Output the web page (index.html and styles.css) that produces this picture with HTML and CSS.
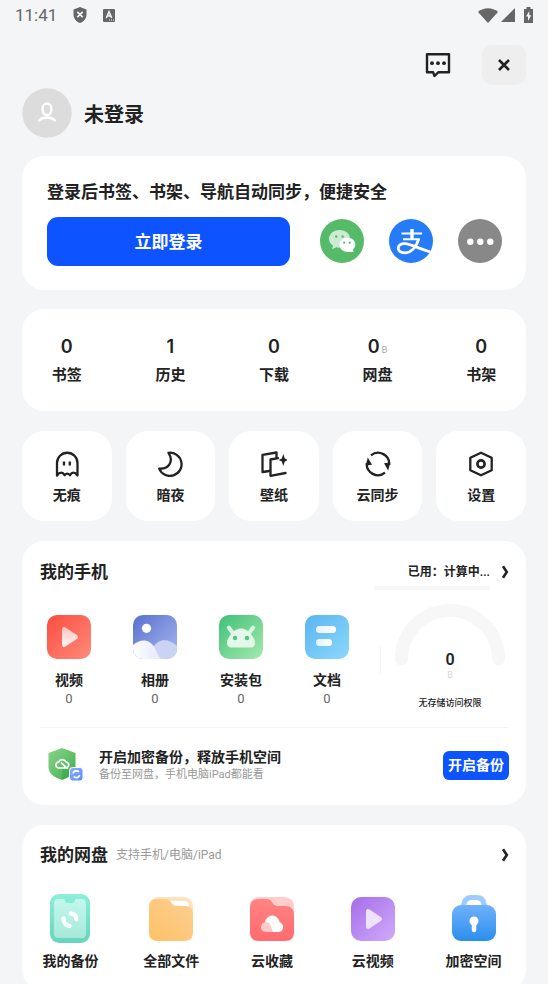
FILE: index.html
```html
<!DOCTYPE html>
<html lang="zh-CN">
<head>
<meta charset="utf-8">
<meta name="viewport" content="width=device-width, initial-scale=1">
<title>我的</title>
<link rel="stylesheet" href="styles.css">
</head>
<body>
<header class="status-bar">
  <time class="clock">11:41</time>
  <svg class="status-icon" width="14" height="16" viewBox="0 0 14 16"><path fill="#666" d="M7 0 13.5 2.5V7.500C13.500 11.500 10.800 14.600 7 16 3.200 14.600.5 11.500.5 7.500V2.500z"/><path d="m4.300 4.800 5.400 5.400m0-5.400-5.400 5.400" stroke="#f4f5f7" stroke-width="1.700"/></svg>
  <svg class="status-icon" width="12" height="13" viewBox="0 0 12 13"><rect width="12" height="13" rx="1" fill="#666"/><path d="M3.300 9 6 2.800 8.700 9M4.200 7h3.600" fill="none" stroke="#f4f5f7" stroke-width="1.600"/><path d="M6 11h5" stroke="#f4f5f7" stroke-dasharray="1 1"/></svg>
  <div class="signals">
    <svg width="20" height="15" viewBox="0 0 20 15"><path fill="#666" d="M0 4C5.500-1 14.500-1 20 4L10 15z"/></svg>
    <svg width="14" height="14" viewBox="0 0 14 14"><path fill="#666" d="M14 0v14H0z"/></svg>
    <svg class="battery" width="9" height="16" viewBox="0 0 9 16"><path fill="#666" d="M2.500 0h4v2H9v14H0V2h2.500z"/><path fill="#f4f5f7" d="M5.300 4 2 9.500h2V14l3.300-5.800H5.300z"/></svg>
  </div>
</header>

<main class="page">
  <div class="actions">
    <button class="icon-button" aria-label="消息"><svg width="26" height="26" viewBox="0 0 26 26"><path d="M2 2.200h22v18H13.500L9.500 24l-1.400-3.800H2z" fill="none" stroke="#222" stroke-width="2.400" stroke-linejoin="round"/><g fill="#222"><circle cx="7" cy="11.200" r="1.900"/><circle cx="13" cy="11.200" r="1.900"/><circle cx="19" cy="11.200" r="1.900"/></g></svg></button>
    <button class="close" aria-label="关闭"><svg width="12" height="12" viewBox="0 0 12 12"><path d="m1 1 10 10m0-10-10 10" stroke="#222" stroke-width="2.600"/></svg></button>
  </div>

  <div class="profile">
    <svg class="avatar" width="50" height="50" viewBox="0 0 50 50"><circle cx="25" cy="25" r="24.700" fill="#dcdcdc"/><g fill="none" stroke="#fff" stroke-width="2.400" stroke-linecap="round"><rect x="20.700" y="15.500" width="8.600" height="11.500" rx="4.300"/><path d="M17 32.500c4-4 12-4 16 0"/></g></svg>
    <h1 class="name">未登录</h1>
  </div>

  <section class="card login">
    <h2 class="login-title">登录后书签、书架、导航自动同步，便捷安全</h2>
    <div class="login-row">
      <button class="login-button">立即登录</button>
      <div class="providers">
        <button class="icon-button" aria-label="微信"><svg width="44" height="44" viewBox="0 0 44 44"><circle cx="22" cy="22" r="22" fill="#56bb68"/><path fill="#cdebd2" d="M19.500 11C13.500 11 9 15 9 19.800c0 2.900 1.500 5.200 4 6.800l-.8 3.700 4-2c1 .3 2.200.4 3.300.4 6 0 10.500-4 10.500-8.900S25.500 11 19.500 11"/><g fill="#56bb68"><circle cx="16.200" cy="17.500" r="1.200"/><circle cx="22.700" cy="17.500" r="1.200"/></g><path fill="#fff" d="M27.500 18.800c-4.500 0-8 3.100-8 7s3.500 7.100 8 7.100h5.900l-.3-2.600c1.300-1.200 2.200-2.700 2.200-4.500 0-3.900-3-7-7.800-7"/><g fill="#56bb68"><circle cx="24.200" cy="23.700" r="1.100"/><circle cx="29.700" cy="23.700" r="1.100"/></g></svg></button>
        <button class="icon-button" aria-label="支付宝"><svg width="44" height="44" viewBox="0 0 44 44"><circle cx="22" cy="22" r="22" fill="#267bf8"/><g fill="none" stroke="#fff"><path d="M12.500 14.600H33M14 20.300h17" stroke-width="2"/><path d="M23 10v10" stroke-width="3.400"/><path d="M29.500 20.300C27 29 21.500 33.800 15.500 33.800c-4 0-6.500-2-6.300-5 .2-3 3.300-4.700 7.500-4.100C23 25.600 30 29.600 41.500 33" stroke-width="2.800"/></g></svg></button>
        <button class="icon-button" aria-label="更多登录方式"><svg width="44" height="44" viewBox="0 0 44 44"><circle cx="22" cy="22" r="22" fill="#888"/><g fill="#fff"><circle cx="12.300" cy="22.800" r="3.200"/><circle cx="22.300" cy="22.800" r="3.200"/><circle cx="32.300" cy="22.800" r="3.200"/></g></svg></button>
      </div>
    </div>
  </section>

  <nav class="card five stats">
    <a href="#" class="stat"><span class="number">0</span>书签</a>
    <a href="#" class="stat"><span class="number">1</span>历史</a>
    <a href="#" class="stat"><span class="number">0</span>下载</a>
    <a href="#" class="stat"><span class="number has-unit">0<small class="unit">B</small></span>网盘</a>
    <a href="#" class="stat"><span class="number">0</span>书架</a>
  </nav>

  <div class="five">
    <button class="tool"><svg width="26" height="26" viewBox="0 0 26 26" fill="none" stroke="#222" stroke-width="2.300" stroke-linejoin="round"><path d="M3 24.500V12a10 10 0 0 1 20.500 0v12.500q-2-2.800-4.200-2.800-1.800 0-3.300 2.500-2.700-3-5.400 0-1.500-2.500-3.300-2.500-2.300 0-4.300 2.800z"/><path d="M10 10.500v4m5.800-4v4"/></svg>无痕</button>
    <button class="tool"><svg width="26" height="26" viewBox="0 0 26 26" fill="none" stroke="#222" stroke-width="2.300" stroke-linejoin="round"><path d="M11.500 1.800A11.600 11.600 0 1 1 2.200 17.600C12 18.500 17 10 11.500 1.800z"/></svg>暗夜</button>
    <button class="tool"><svg width="26" height="26" viewBox="0 0 26 26" fill="none" stroke="#222" stroke-width="2.300" stroke-linejoin="round" stroke-linecap="round"><path d="M8.500 20 1.500 21V3.800L15.500 1.500v5.300"/><path d="M17 7.200 9.500 8.500v16.300L24.500 22"/><path fill="#222" stroke="none" d="m22.300 3 1.500 4.500 3 1.500-3 1.500-1.500 4.500-1.500-4.500-3-1.500 3-1.500z"/></svg>壁纸</button>
    <button class="tool"><svg width="26" height="26" viewBox="0 0 26 26" fill="none" stroke="#222" stroke-width="2.300"><path d="M6 4.300A11.200 11.200 0 0 1 24.200 14M20 21.700A11.200 11.200 0 0 1 1.800 12"/><path fill="#222" stroke="none" d="m2.800 6.500 4.200 7.300-6.300.7zM23.200 19.500 19 12.200l6.300-.7z"/></svg>云同步</button>
    <button class="tool"><svg width="26" height="26" viewBox="0 0 26 26" fill="none" stroke="#222" stroke-width="2.300" stroke-linejoin="round"><path d="m13 1.700 10.700 5.100v12.400L13 24.300 2.300 19.200V6.800z"/><circle cx="13" cy="13" r="3.600" stroke-width="2.600"/></svg>设置</button>
  </div>

  <section class="card phone">
    <div class="card-head">
      <h2 class="card-title">我的手机</h2>
      <a href="#" class="usage"><span class="usage-text">已用：计算中...</span><svg width="8" height="14" viewBox="0 0 8 14"><path d="M2 1.200 5.800 7 2 12.800" fill="none" stroke="#222" stroke-width="2.600"/></svg></a>
    </div>
    <div class="storage">
      <div class="files">
        <a href="#" class="file"><svg width="44" height="44" viewBox="0 0 44 44"><defs><linearGradient id="red" x2="1" y2="1"><stop stop-color="#fb4d40"/><stop offset="1" stop-color="#ff8b7b"/></linearGradient><linearGradient id="pink" x2="0" y2="1"><stop stop-color="#ffc9c4"/><stop offset="1" stop-color="#fff1f0"/></linearGradient></defs><rect width="44" height="44" rx="10" fill="url(#red)"/><path d="M17 14v16l12-8z" fill="url(#pink)" stroke="url(#pink)" stroke-width="4" stroke-linejoin="round"/></svg>视频<span class="count">0</span></a>
        <a href="#" class="file"><svg width="44" height="44" viewBox="0 0 44 44"><defs><linearGradient id="indigo" x2="1" y2="1"><stop stop-color="#5870cf"/><stop offset="1" stop-color="#a9b8ee"/></linearGradient><linearGradient id="snow" x2="1"><stop stop-color="#fff"/><stop offset="1" stop-color="#e3e8fa"/></linearGradient><clipPath id="photo"><rect width="44" height="44" rx="10"/></clipPath></defs><g clip-path="url(#photo)"><rect width="44" height="44" fill="url(#indigo)"/><path fill="#cad3f4" d="M20 33c5-10 15-10 24-2v13H24z"/><path fill="url(#snow)" d="M0 30c8-7 17-6 22 3 2 4 3 8 6 11H0z"/></g><circle cx="13.500" cy="13.300" r="4.600" fill="#fff"/></svg>相册<span class="count">0</span></a>
        <a href="#" class="file"><svg width="44" height="44" viewBox="0 0 44 44"><defs><linearGradient id="green" x2="1" y2="1"><stop stop-color="#3fc077"/><stop offset="1" stop-color="#a5e9af"/></linearGradient></defs><rect width="44" height="44" rx="10" fill="url(#green)"/><path d="m9.800 12.500 4 5.500m20.400-5.500-4 5.500" stroke="#d8f5e2" stroke-width="4" stroke-linecap="round"/><path fill="#e3f8e9" d="M13 18c5-6 13-6 18 0 3 3 5 7 5 10 0 3-2 4.500-4 4.500H12c-2 0-4-1.500-4-4.500 0-3 2-7 5-10"/><g fill="#54c57f"><circle cx="16" cy="23" r="2.200"/><circle cx="28" cy="23" r="2.200"/></g></svg>安装包<span class="count">0</span></a>
        <a href="#" class="file"><svg width="44" height="44" viewBox="0 0 44 44"><defs><linearGradient id="sky" x2="1" y2="1"><stop stop-color="#5bb5f0"/><stop offset="1" stop-color="#8bd8fc"/></linearGradient><linearGradient id="line"><stop stop-color="#e4f4fe"/><stop offset="1" stop-color="#fff"/></linearGradient></defs><rect width="44" height="44" rx="10" fill="url(#sky)"/><rect x="11" y="11" width="20" height="7" rx="3.500" fill="url(#line)"/><rect x="11" y="24" width="16" height="7" rx="3.500" fill="url(#line)"/></svg>文档<span class="count">0</span></a>
      </div>
      <div class="gauge">
        <svg class="arc" width="110" height="62" viewBox="0 0 110 62"><path d="M6.500 55a48.500 48.500 0 0 1 97 0" fill="none" stroke="#f7f7f7" stroke-width="13" stroke-linecap="round"/></svg>
        <div class="gauge-value">0</div>
        <div class="gauge-unit">B</div>
        <div class="gauge-note">无存储访问权限</div>
      </div>
    </div>
    <div class="backup">
      <svg class="shield" width="36" height="36" viewBox="0 0 36 36"><defs><linearGradient id="leaf" x2="1" y2="1"><stop stop-color="#8bd488"/><stop offset="1" stop-color="#3fae50"/></linearGradient><linearGradient id="badge" x2="1" y2="1"><stop stop-color="#8eb2ff"/><stop offset="1" stop-color="#5889fa"/></linearGradient></defs><path fill="url(#leaf)" d="M14 1 27.500 6v14c0 6-5 10-13.500 13C5 30 .5 26 .5 20V6z"/><path fill="#319c45" opacity=".35" d="M14 22h13c-1 5-6 8.500-13 11z"/><path d="m13 15.500 5.500 5.500H11a3 3 0 0 1-.3-6 4 4 0 0 1 7.300-.2 3.200 3.200 0 0 1 .5 6.200" fill="none" stroke="#fff" stroke-width="1.700"/><rect x="21.500" y="20.500" width="13.500" height="13.500" rx="3" fill="url(#badge)" stroke="#fff"/><path d="M25 26.500a3.500 3.500 0 0 1 6-1.500m.700 3a3.500 3.500 0 0 1-6 1.500" fill="none" stroke="#fff" stroke-width="1.800"/></svg>
      <div class="backup-text">
        <h3 class="backup-title">开启加密备份，释放手机空间</h3>
        <p class="backup-note">备份至网盘，手机电脑iPad都能看</p>
      </div>
      <button class="backup-button">开启备份</button>
    </div>
  </section>

  <section class="card cloud">
    <div class="card-head">
      <h2 class="card-title">我的网盘</h2>
      <span class="hint">支持手机/电脑/iPad</span>
      <a href="#" class="more" aria-label="打开网盘"><svg width="8" height="14" viewBox="0 0 8 14"><path d="M2 1.200 5.800 7 2 12.800" fill="none" stroke="#222" stroke-width="2.600"/></svg></a>
    </div>
    <div class="drive">
      <a href="#" class="file"><svg width="50" height="50" viewBox="0 0 50 50"><defs><linearGradient id="mint" x2="0" y2="1"><stop stop-color="#89f0d9"/><stop offset="1" stop-color="#67d4bd"/></linearGradient><linearGradient id="screen" x2="0" y2="1"><stop stop-color="#c3f7ec"/><stop offset="1" stop-color="#a6e9db"/></linearGradient></defs><rect x="5" width="40" height="49" rx="9" fill="url(#mint)"/><path fill="url(#screen)" d="M13 5h6c1 0 1.200 4 3 4h6c1.800 0 2-4 3-4h6c2.500 0 4 1.500 4 4v31c0 2.500-1.500 4-4 4H13c-2.500 0-4-1.500-4-4V9c0-2.500 1.500-4 4-4"/><path d="M26 19.500c3.500.5 5.500 3 5.300 5.500M18.500 24.500c0 4 2.500 7 6 7.500" fill="none" stroke="#fff" stroke-width="4.500" stroke-linecap="round"/></svg>我的备份</a>
      <a href="#" class="file"><svg width="50" height="50" viewBox="0 0 50 50"><defs><linearGradient id="amber" x1="1" x2="0" y2="1"><stop stop-color="#fbcf94"/><stop offset="1" stop-color="#ffc265"/></linearGradient></defs><rect x="3" y="3" width="44" height="30" rx="9" fill="#fee2bb"/><path fill="#fff" d="M23 7h16c2 0 4 2 4 5H27z"/><path fill="url(#amber)" d="M12 5h7c4 0 5 2 7 4.500 1.500 2 3 2.500 6 2.500h6c6 0 9 3 9 9v17c0 6-3 9-9 9H12c-6 0-9-3-9-9V14c0-6 3-9 9-9"/></svg>全部文件</a>
      <a href="#" class="file"><svg width="50" height="50" viewBox="0 0 50 50"><defs><linearGradient id="coral" x2="0" y2="1"><stop stop-color="#ff8482"/><stop offset="1" stop-color="#ff6b6e"/></linearGradient></defs><rect x="3" y="3" width="44" height="30" rx="9" fill="#ffcdcc"/><path fill="url(#coral)" d="M12 5h7c4 0 5 2 7 4.500 1.500 2 3 2.500 6 2.500h6c6 0 9 3 9 9v17c0 6-3 9-9 9H12c-6 0-9-3-9-9V14c0-6 3-9 9-9"/><path fill="#fff" d="M18 28a7.300 7.300 0 0 1 14.500 0c5.500 2 4.500 10-1 10H21z"/><path fill="#ffcaca" d="M26 38h-7c-7 0-6.500-10 0-10 4 0 5 4 7 10"/></svg>云收藏</a>
      <a href="#" class="file"><svg width="50" height="50" viewBox="0 0 50 50"><defs><linearGradient id="violet" x2="1" y2="1"><stop stop-color="#a56de9"/><stop offset="1" stop-color="#cfabfa"/></linearGradient></defs><rect x="3" y="3" width="44" height="44" rx="10" fill="url(#violet)"/><path d="M20 17v16l12-8z" fill="#eee2fc" stroke="#eee2fc" stroke-width="4" stroke-linejoin="round"/></svg>云视频</a>
      <a href="#" class="file"><svg width="50" height="50" viewBox="0 0 50 50"><defs><linearGradient id="azure" x2="0" y2="1"><stop stop-color="#70b1fc"/><stop offset="1" stop-color="#2b8eed"/></linearGradient></defs><path d="M14.500 14c0-7 3-10.500 8-10.500h5c5 0 8 3.500 8 10.500" fill="none" stroke="#9dcbfb" stroke-width="5"/><rect x="3" y="11" width="44" height="36" rx="9" fill="url(#azure)"/><circle cx="25" cy="27" r="4.500" fill="#fff"/><path d="M25 29v7" stroke="#fff" stroke-width="4.500" stroke-linecap="round"/></svg>加密空间</a>
    </div>
  </section>
</main>
</body>
</html>
```
FILE: styles.css
```css
* {
  box-sizing: border-box;
}

html {
  scrollbar-width: none;
}

body {
  margin: 0;
  background: #f4f5f7;
  color: #222;
  font-family: Roboto, "Noto Sans CJK SC", sans-serif;
  font-size: 14px;
  font-weight: 600;
  line-height: 20px;
}

h1, h2, h3, p {
  margin: 0;
  font-weight: 600;
}

a {
  color: inherit;
  text-decoration: none;
}

button {
  padding: 0;
  border: 0;
  background: none;
  color: inherit;
  font: inherit;
  cursor: pointer;
}

svg {
  display: block;
  flex: none;
}

.status-bar {
  display: flex;
  align-items: center;
  height: 30px;
  padding: 0 15px;
}

.clock {
  color: #666;
  font-size: 17px;
  font-weight: 400;
}

.status-icon {
  margin-left: 16px;
}

.signals {
  display: flex;
  align-items: center;
  gap: 3px;
  margin-left: auto;
}

.battery {
  margin-left: 6px;
}

.page {
  padding: 15px 22px 0;
}

.actions {
  display: flex;
  justify-content: flex-end;
  gap: 31px;
}

.icon-button {
  display: flex;
  align-items: center;
}

.close {
  display: flex;
  align-items: center;
  justify-content: center;
  width: 44px;
  height: 40px;
  border-radius: 10px;
  background: #eee;
}

.profile {
  display: flex;
  align-items: center;
  gap: 12px;
  margin: 3px 0 18px;
}

.name {
  padding-top: 4px;
  font-size: 20px;
  line-height: 28px;
}

.card {
  margin-bottom: 20px;
  border-radius: 22px;
  background: #fff;
}

.login {
  padding: 23px 24px 24px 25px;
  margin-bottom: 19px;
}

.login-title {
  font-size: 17px;
  line-height: 26px;
}

.login-row {
  display: flex;
  gap: 30px;
  margin-top: 12px;
}

.login-button {
  flex: 1;
  height: 49px;
  border-radius: 11px;
  background: #0d53ff;
  color: #fff;
  font-size: 17px;
}

.providers {
  display: flex;
  align-items: flex-start;
  gap: 25px;
  padding-top: 2px;
}

.five {
  display: grid;
  grid-template-columns: repeat(5, 1fr);
  gap: 14px;
  margin-bottom: 20px;
}

.stats {
  padding: 26px 0 24px;
}

.stat {
  display: flex;
  flex-direction: column;
  align-items: center;
  gap: 4px;
  font-size: 15px;
  line-height: 24px;
}

.number {
  position: relative;
  font-family: Inter, sans-serif;
  font-size: 18px;
}

.has-unit {
  right: 4px;
}

.unit {
  position: absolute;
  left: 100%;
  bottom: -3px;
  margin-left: 2px;
  color: #aaa;
  font-size: 9px;
  font-weight: 400;
}

.tool {
  display: flex;
  flex-direction: column;
  align-items: center;
  gap: 8px;
  padding: 20px 0 16px;
  border-radius: 22px;
  background: #fff;
}

.card-head {
  display: flex;
  align-items: center;
  padding: 0 17px 0 18px;
}

.phone {
  padding: 17px 0 22px;
}

.card-title {
  font-size: 17px;
  line-height: 28px;
}

.usage {
  display: flex;
  align-items: center;
  gap: 11px;
  margin-left: auto;
  font-size: 12px;
}

.usage-text {
  position: relative;
}

.usage-text::after {
  content: "";
  position: absolute;
  top: 24px;
  right: 0;
  width: 116px;
  height: 4px;
  background: #f7f7f7;
}

.storage {
  display: flex;
  padding: 18px 17px 18px 4px;
}

.files {
  display: grid;
  flex: 1;
  grid-template-columns: repeat(4, 1fr);
  padding-top: 11px;
}

.file {
  display: flex;
  flex-direction: column;
  align-items: center;
}

.files svg {
  margin-bottom: 11px;
}

.count {
  color: #666;
  font-size: 13px;
  font-weight: 400;
  line-height: 18px;
}

.gauge {
  position: relative;
  display: flex;
  flex-direction: column;
  align-items: center;
  width: 139px;
  padding-left: 21px;
}

.gauge::before {
  content: "";
  position: absolute;
  top: 42px;
  left: 10px;
  width: 1px;
  height: 28px;
  background: #f3f3f3;
}

.gauge-value {
  margin-top: -16px;
  font-size: 16px;
}

.gauge-unit {
  color: #d4d4d4;
  font-size: 9px;
  font-weight: 400;
  line-height: 10px;
}

.gauge-note {
  margin-top: 17px;
  font-size: 9px;
  font-weight: 500;
  line-height: 12px;
}

.backup {
  display: flex;
  align-items: center;
  margin: 0 17px 0 18px;
  padding: 19px 0 0 8px;
  border-top: 1px solid #f4f4f4;
}

.backup-text {
  flex: 1;
  margin-left: 15px;
}

.backup-title {
  font-size: 14px;
  line-height: 20px;
}

.backup-note {
  color: #999;
  font-size: 11px;
  font-weight: 400;
  line-height: 16px;
}

.backup-button {
  height: 29px;
  padding: 0 5px;
  border-radius: 6px;
  background: #0d53ff;
  color: #fff;
}

.cloud {
  margin-bottom: 0;
  padding: 16px 0 20px;
}

.hint {
  margin-left: 8px;
  color: #999;
  font-size: 12px;
  font-weight: 400;
}

.more {
  margin-left: auto;
}

.drive {
  display: grid;
  grid-template-columns: repeat(5, 1fr);
  margin: 0 2px 0 -2px;
  padding-top: 25px;
}

.drive svg {
  margin-bottom: 7px;
}
```
